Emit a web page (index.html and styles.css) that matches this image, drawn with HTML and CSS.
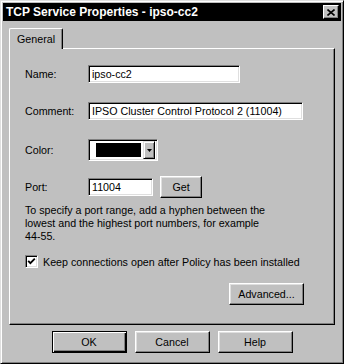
FILE: index.html
```html
<!DOCTYPE html>
<html>
<head>
<meta charset="utf-8">
<link rel="stylesheet" href="styles.css">
</head>
<body>
<div class="window">
  <div class="titlebar">
    <span class="title">TCP Service Properties - ipso-cc2</span>
    <span class="close"><svg width="8" height="7" viewBox="0 0 8 7"><path d="M0.5 0.5 L7.5 6.5 M7.5 0.5 L0.5 6.5" stroke="#000" stroke-width="1.6" fill="none"/></svg></span>
  </div>
  <div class="tabs"><div class="tab">General</div></div>
  <div class="panel">
    <div class="row r-name"><span class="label">Name:</span><div class="field f-name">ipso-cc2</div></div>
    <div class="row r-comment"><span class="label">Comment:</span><div class="field f-comment">IPSO Cluster Control Protocol 2 (11004)</div></div>
    <div class="row r-color"><span class="label">Color:</span>
      <div class="combo"><div class="swatch"></div><div class="drop"><svg width="5" height="3" viewBox="0 0 5 3"><path d="M0 0 H5 L2.5 3 Z" fill="#000"/></svg></div></div>
    </div>
    <div class="row r-port"><span class="label">Port:</span><div class="field f-port">11004</div><div class="btn get">Get</div></div>
    <p class="hint">To specify a port range, add a hyphen between the<br>lowest and the highest port numbers, for example<br>44-55.</p>
    <div class="check-row"><span class="checkbox"><svg width="9" height="9" viewBox="0 0 9 9"><path d="M1.2 3.8 L3.4 6.2 L7.8 1.6" stroke="#000" stroke-width="1.8" fill="none"/></svg></span><span>Keep connections open after Policy has been installed</span></div>
    <div class="btn advanced">Advanced...</div>
  </div>
  <div class="buttons">
    <div class="btn dlg default">OK</div>
    <div class="btn dlg">Cancel</div>
    <div class="btn dlg">Help</div>
  </div>
</div>
</body>
</html>
```
FILE: styles.css
```css
html, body {
  margin: 0;
  background: #c0c0c0;
}
body {
  font-family: "Liberation Sans", Arial, sans-serif;
  font-size: 10.7px;
  color: #000;
}
.window {
  width: 344px;
  height: 364px;
  box-sizing: border-box;
  border: 1px solid;
  border-color: #dfdfdf #000 #000 #dfdfdf;
  box-shadow: inset 1px 1px #fff, inset -1px -1px #808080;
  padding: 2px;
  display: flex;
  flex-direction: column;
  background: #c0c0c0;
}
.titlebar {
  height: 18px;
  flex: none;
  background: #000;
  display: flex;
  align-items: center;
  justify-content: space-between;
  padding: 0 2px 0 3px;
}
.title {
  color: #fff;
  font-weight: bold;
  font-size: 12px;
}
.close {
  width: 16px;
  height: 14px;
  box-sizing: border-box;
  background: #c0c0c0;
  border: 1px solid;
  border-color: #fff #000 #000 #fff;
  box-shadow: inset -1px -1px #808080;
  display: flex;
  align-items: center;
  justify-content: center;
}
.tabs {
  margin: 7px 0 0 6px;
  display: flex;
}
.tab {
  position: relative;
  z-index: 1;
  width: 54px;
  height: 21px;
  margin-bottom: -1px;
  box-sizing: border-box;
  border: 1px solid;
  border-color: #fff #000 transparent #fff;
  border-bottom: none;
  border-radius: 2px 2px 0 0;
  box-shadow: inset -1px 0 #808080;
  background: #c0c0c0;
  display: flex;
  align-items: center;
  justify-content: center;
  padding-bottom: 1px;
}
.panel {
  margin-left: 6px;
  width: 326px;
  height: 277px;
  box-sizing: border-box;
  border: 1px solid;
  border-color: #fff #000 #000 #fff;
  box-shadow: inset -1px -1px #808080;
  display: flex;
  flex-direction: column;
  padding: 16px 0 0 15px;
}
.row {
  display: flex;
  align-items: center;
}
.label {
  width: 63px;
  flex: none;
}
.field {
  height: 18px;
  box-sizing: border-box;
  background: #fff;
  border: 1px solid;
  border-color: #808080 #fff #fff #808080;
  box-shadow: inset 1px 1px #000, inset -1px -1px #dfdfdf;
  padding: 0 3px;
  display: flex;
  align-items: center;
  white-space: nowrap;
}
.f-name { width: 152px; }
.r-comment { margin-top: 19px; }
.f-comment { width: 215px; }
.r-color { margin-top: 19px; }
.combo {
  width: 70px;
  height: 22px;
  box-sizing: border-box;
  background: #fff;
  border: 1px solid;
  border-color: #808080 #fff #fff #808080;
  box-shadow: inset 1px 1px #000, inset -1px -1px #dfdfdf;
  padding: 2px;
  display: flex;
  align-items: center;
}
.swatch {
  width: 45px;
  height: 14px;
  background: #000;
  margin-left: 5px;
}
.drop {
  margin-left: auto;
  width: 12px;
  height: 18px;
  box-sizing: border-box;
  background: #c0c0c0;
  border: 1px solid;
  border-color: #dfdfdf #000 #000 #dfdfdf;
  box-shadow: inset 1px 1px #fff, inset -1px -1px #808080;
  display: flex;
  align-items: center;
  justify-content: center;
}
.r-port { margin-top: 15px; height: 22px; }
.f-port { width: 65px; }
.btn {
  box-sizing: border-box;
  height: 22px;
  background: #c0c0c0;
  border: 1px solid;
  border-color: #fff #000 #000 #fff;
  box-shadow: inset -1px -1px #808080, inset 1px 1px #dfdfdf;
  display: flex;
  align-items: center;
  justify-content: center;
  white-space: nowrap;
}
.get {
  width: 42px;
  margin-left: 7px;
}
.hint {
  margin: 6px 0 0 0;
  line-height: 13px;
}
.check-row {
  margin-top: 12px;
  display: flex;
  align-items: center;
  gap: 5px;
}
.checkbox {
  width: 13px;
  height: 13px;
  box-sizing: border-box;
  background: #fff;
  border: 1px solid;
  border-color: #808080 #fff #fff #808080;
  box-shadow: inset 1px 1px #000, inset -1px -1px #dfdfdf;
  display: flex;
  align-items: center;
  justify-content: center;
}
.advanced {
  margin-top: 15px;
  align-self: flex-end;
  margin-right: 30px;
  width: 75px;
}
.buttons {
  margin-top: 6px;
  display: flex;
  justify-content: center;
  gap: 8px;
}
.dlg {
  width: 75px;
}
.default {
  border: 1px solid #000;
  box-shadow: inset 1px 1px #fff, inset -1px -1px #000, inset -2px -2px #808080;
}
```
